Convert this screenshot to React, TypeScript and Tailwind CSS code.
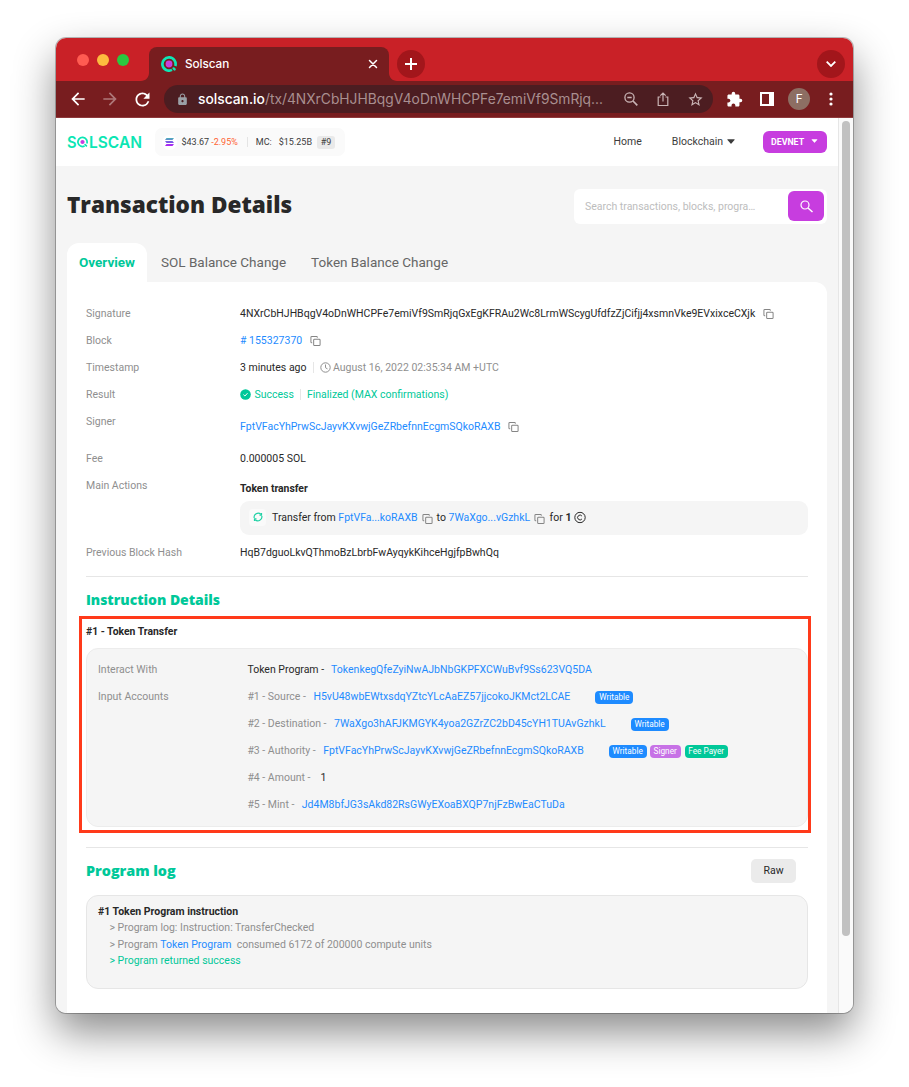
import React from "react";
import { Copy } from "lucide-react";
import { MdExtension, MdLock, MdStarBorder, MdRefresh, MdArrowBack, MdArrowForward } from "react-icons/md";

function CopyIcon({ className = "" }: { className?: string }) {
  return <Copy className={`h-[11px] w-[11px] shrink-0 translate-y-[0.5px] text-[#858585] ${className}`} strokeWidth={2.2} />;
}

function Link({ children }: { children: React.ReactNode }) {
  return <span className="text-[#1e8bff]">{children}</span>;
}

function Row({ label, children, className = "h-[27px]" }: { label: string; children: React.ReactNode; className?: string }) {
  return (
    <div className={`flex ${className}`}>
      <div className="h-[27px] w-[154px] shrink-0 leading-[27px] text-[#8f8f8f]">{label}</div>
      <div className="flex min-w-0 flex-1 items-center">{children}</div>
    </div>
  );
}

function Divider() {
  return <span className="h-[11px] w-px bg-[#e6e6e6]" />;
}

function Caret({ className }: { className: string }) {
  return (
    <svg viewBox="0 0 8 5" className={className} fill="currentColor">
      <path d="M.8.3h6.4c.4 0 .6.4.3.7L4.4 4.5c-.2.3-.6.3-.8 0L.5 1C.2.7.4.3.8.3z" />
    </svg>
  );
}

const badgeTone = {
  Writable: "bg-[#1e8bff] w-[38px]",
  Signer: "bg-[#c772e6] w-[31px]",
  "Fee Payer": "bg-[#00c899] w-[43px] ml-px",
};
type BadgeName = keyof typeof badgeTone;

function Badge({ name }: { name: BadgeName }) {
  return (
    <span className={`h-[13px] rounded-[4px] text-center text-[8.25px] leading-[13px] text-white ${badgeTone[name]}`}>{name}</span>
  );
}

function Account({ label, value, badges = [] }: { label: string; value: string; badges?: BadgeName[] }) {
  return (
    <div className="flex h-[27px] items-center">
      <span className="text-[#8f8f8f]">{label}</span>
      <span className="ml-[7.5px]"><Link>{value}</Link></span>
      <span className="ml-[25px] flex translate-y-[1px] gap-[3px]">
        {badges.map((b) => <Badge key={b} name={b} />)}
      </span>
    </div>
  );
}

function TabStrip() {
  return (
    <div className="flex h-[43px] items-end bg-[#c92127]">
      <div className="flex h-[43px] w-[85px] gap-[8px] pl-[21px] pt-[16px]">
        <span className="h-[12px] w-[12px] rounded-full bg-[#ff5b52]" />
        <span className="h-[12px] w-[12px] rounded-full bg-[#fdbb3f]" />
        <span className="h-[12px] w-[12px] rounded-full bg-[#2ac840]" />
      </div>
      <svg viewBox="0 0 8 8" className="h-[8px] w-[8px] text-[#781d1f]" fill="currentColor"><path d="M8 0v8H0c4.400 0 8-3.600 8-8z" /></svg>
      <div className="flex h-[34px] w-[240px] items-center rounded-t-[8px] bg-[#781d1f] pl-[12px] pr-[11px]">
        <svg viewBox="0 0 16 16" className="h-[16px] w-[16px]" fill="none">
          <path d="M11 13.900A6.600 6.600 0 1 1 14.300 10" stroke="#0fe6b5" strokeWidth="2.700" />
          <circle cx="8" cy="8" r="3.400" fill="#c73ddf" />
          <path d="M12.600 12.400l1 1" stroke="#0fe6b5" strokeWidth="2.400" strokeLinecap="round" />
        </svg>
        <span className="ml-[8px] translate-y-[1px] font-['Inter',sans-serif] text-[11.75px] font-medium tracking-[-0.05px] text-white">Solscan</span>
        <svg viewBox="0 0 10 10" className="ml-auto h-[10px] w-[10px]" stroke="#fff" strokeWidth="1.500" strokeLinecap="round"><path d="M1.500 1.500l7 7M8.500 1.500l-7 7" /></svg>
      </div>
      <svg viewBox="0 0 8 8" className="h-[8px] w-[8px] text-[#781d1f]" fill="currentColor"><path d="M0 0v8h8C3.600 8 0 4.400 0 0z" /></svg>
      <div className="mb-[3px] flex h-[28px] w-[28px] items-center justify-center rounded-full bg-[#a2161b]">
        <svg viewBox="0 0 12 12" className="h-[12px] w-[12px]" stroke="#fff" strokeWidth="2"><path d="M6 0v12M0 6h12" /></svg>
      </div>
      <div className="mb-[3px] ml-auto mr-[8px] flex h-[28px] w-[28px] items-center justify-center rounded-full bg-[#a2161b]">
        <svg viewBox="0 0 10 6" className="h-[6px] w-[10px]" stroke="#fff" strokeWidth="1.800" fill="none"><path d="M.7.7L5 5 9.300.7" /></svg>
      </div>
    </div>
  );
}

function Toolbar() {
  return (
    <div className="flex h-[37px] items-center border-b border-[#8f3a3c] bg-[#781d1f] pl-[12px] text-white">
      <MdArrowBack className="h-[20px] w-[20px]" />
      <MdArrowForward className="ml-[12px] h-[20px] w-[20px] opacity-40" />
      <MdRefresh className="ml-[12px] h-[21px] w-[21px]" />
      <div className="ml-[11px] flex h-[28px] w-[549px] items-center rounded-full bg-[#4c1d21] pl-[12px] text-[#c9b4b5]">
        <MdLock className="h-[13px] w-[13px] text-[#9aa0a6]" />
        <span className="ml-[9px] w-[406px] whitespace-nowrap font-['Inter',sans-serif] text-[13.8px] text-[#a98f90]">
          <span className="font-medium text-white">solscan.io</span>
          <span>/tx/4NXrCbHJHBqgV4oDnWHCPFe7emiVf9SmRjq...</span>
        </span>
        <svg viewBox="0 0 14 14" className="ml-[20px] h-[14px] w-[14px]" fill="none" stroke="currentColor" strokeWidth="1.300"><circle cx="5.500" cy="5.500" r="4.600" /><path d="M9 9l4.300 4.300" strokeWidth="1.700" /><path d="M3.300 5.500h4.400" /></svg>
        <svg viewBox="0 0 14 15" className="ml-[18px] h-[15px] w-[14px]" fill="none" stroke="currentColor" strokeWidth="1.200"><path d="M4.500 5H2.200v8.500h9.600V5H9.500M7 9.500V1.200M4.300 3.700L7 1l2.700 2.700" /></svg>
        <MdStarBorder className="ml-[17px] h-[17px] w-[17px]" />
      </div>
      <MdExtension className="ml-[13px] h-[17px] w-[17px]" />
      <svg viewBox="0 0 14 14" className="ml-[17px] h-[14px] w-[14px]" fill="currentColor"><path fillRule="evenodd" d="M0 0h14v14H0zM2 2v10h7V2z" /></svg>
      <span className="ml-[14px] flex h-[22px] w-[22px] items-center justify-center rounded-full bg-[#8d6e63] font-['Roboto',sans-serif] text-[12px]">F</span>
      <svg viewBox="0 0 4 14" className="ml-[19px] h-[14px] w-[4px]" fill="currentColor"><circle cx="2" cy="2" r="1.600" /><circle cx="2" cy="7" r="1.600" /><circle cx="2" cy="12" r="1.600" /></svg>
    </div>
  );
}

function SiteHeader() {
  return (
    <div className="flex h-[48px] items-center bg-white px-[11px] text-[#3c3c3c]">
      <div className="flex w-[75px] items-center font-['Inter',sans-serif] text-[16px] font-semibold leading-none text-[#0ce6b4]">
        <span className="w-[12px] origin-left scale-x-[0.92]">S</span>
        <svg viewBox="0 0 12 12" className="h-[12px] w-[11px] shrink-0" fill="none">
          <path d="M8.300 10.400A5 5 0 1 1 10.700 7.700" stroke="#0ce6b4" strokeWidth="1.900" />
          <circle cx="6" cy="6" r="2.300" fill="#c73ddf" />
          <path d="M8.800 8.800l1.500 1.500" stroke="#0ce6b4" strokeWidth="1.800" strokeLinecap="round" />
        </svg>
        <span className="ml-px origin-left scale-x-[0.97]">LSCAN</span>
      </div>
      <div className="ml-[12.500px] flex h-[28px] w-[190px] items-center rounded-[7px] bg-[#fafafa] pl-[7px] text-[9px]">
        <span className="flex h-[15px] w-[15px] items-center justify-center rounded-full bg-white">
          <svg viewBox="0 0 9 8" className="h-[8px] w-[9px]" fill="none">
            <defs><linearGradient id="sol" x1="0" y1="8" x2="0" y2="0" gradientUnits="userSpaceOnUse"><stop stopColor="#b51cf5" /><stop offset=".5" stopColor="#7a5be6" /><stop offset="1" stopColor="#4bb3b8" /></linearGradient></defs>
            <path d="M1.500 0H9L7.500 1.900H0zM0 3.050h7.500L9 4.950H1.500zM1.500 6.100H9L7.500 8H0z" fill="url(#sol)" />
          </svg>
        </span>
        <span className="ml-[5px] translate-y-[0.5px]">$43.67</span>
        <span className="ml-[2px] translate-y-[0.5px] text-[#ff6433]">-2.95%</span>
        <span className="ml-[9px] h-[10px] w-px bg-[#e4e4e4]" />
        <span className="ml-[8px] translate-y-[0.5px]">MC:</span>
        <span className="ml-[7px] translate-y-[0.5px]">$15.25B</span>
        <span className="ml-[5px] h-[13px] w-[18px] rounded-[3px] bg-[#e9e9e9] text-center leading-[13px]">#9</span>
      </div>
      <span className="ml-auto">Home</span>
      <span className="ml-[30px]">Blockchain</span>
      <Caret className="ml-[4px] h-[5px] w-[8px] -translate-y-px" />
      <div className="ml-[28px] flex h-[22px] w-[64px] items-center rounded-[6px] bg-[#c73ddf] pl-[8px] text-[8.8px] font-bold text-white">
        <span className="translate-y-[0.5px]">DEVNET</span>
        <Caret className="ml-[7px] h-[4px] w-[7px] -translate-y-px" />
      </div>
    </div>
  );
}

function SectionTitle({ children }: { children: React.ReactNode }) {
  return <h2 className="font-['Open_Sans',sans-serif] text-[14px] font-extrabold tracking-[-0.04px] text-[#00c899]">{children}</h2>;
}

function TransactionCard() {
  return (
    <div className="min-h-0 flex-1 rounded-tr-[12px] bg-white px-[19px] pt-[18px]">
      <Row label="Signature">4NXrCbHJHBqgV4oDnWHCPFe7emiVf9SmRjqGxEgKFRAu2Wc8LrmWScygUfdfzZjCifjj4xsmnVke9EVxixceCXjk<CopyIcon className="ml-[7.500px]" /></Row>
      <Row label="Block"><Link># 155327370</Link><CopyIcon className="ml-[7.500px]" /></Row>
      <Row label="Timestamp">
        <span className="mr-[7px]">3 minutes ago</span><Divider />
        <svg viewBox="0 0 11 11" className="ml-[5.500px] h-[11px] w-[11px]" fill="none" stroke="#8f8f8f"><circle cx="5.500" cy="5.500" r="4.700" /><path d="M5.500 2.500v3.200l2 1.200" /></svg>
        <span className="ml-[2px] text-[#8f8f8f]">August 16, 2022 02:35:34 AM +UTC</span>
      </Row>
      <Row label="Result">
        <svg viewBox="0 0 11 11" className="h-[11px] w-[11px]" fill="none"><circle cx="5.500" cy="5.500" r="5.300" fill="#00c899" /><path d="M3.400 5.600l1.500 1.400 2.600-2.800" stroke="#fff" /></svg>
        <span className="ml-[3.500px] mr-[6px] text-[#00c899]">Success</span><Divider />
        <span className="ml-[6px] text-[#00c899]">Finalized (MAX confirmations)</span>
      </Row>
      <Row label="Signer" className="h-[37px]"><Link>FptVFacYhPrwScJayvKXvwjGeZRbefnnEcgmSQkoRAXB</Link><CopyIcon className="ml-[7.500px]" /></Row>
      <Row label="Fee">0.000005 SOL</Row>
      <Row label="Main Actions" className="h-[67px]">
        <div className="w-full">
          <div className="h-[29px] pt-[4px] text-[10.4px] font-bold leading-[25px]">Token transfer</div>
          <div className="mb-[4px] flex h-[34px] items-center rounded-[9px] bg-[#f5f5f5] pl-[9px]">
            <span className="mr-[6px] flex h-[17px] w-[17px] -translate-y-px items-center justify-center rounded-[4px] bg-[#fafafa]">
              <svg viewBox="0 0 10 10" className="h-[10px] w-[10px]" fill="none" stroke="#1fd1a5" strokeWidth="1.200">
                <path d="M1.200 6A4 4 0 0 1 7.900 2.300M8.800 4A4 4 0 0 1 2.100 7.700" /><path d="M8.500.900v2.200H6.500M1.500 9.100V6.900h2" />
              </svg>
            </span>
            <span className="whitespace-pre">Transfer from </span><Link>FptVFa...koRAXB</Link><CopyIcon className="ml-[4px] mr-[4px]" />
            <span className="whitespace-pre">to </span><Link>7WaXgo...vGzhkL</Link><CopyIcon className="ml-[3.500px] mr-[5px]" />
            <span className="whitespace-pre">for <b className="font-bold">1</b></span>
            <svg viewBox="0 0 12 12" className="ml-[3px] h-[12px] w-[12px] -translate-y-[0.5px]" fill="none" stroke="#282828"><circle cx="6" cy="6" r="5.200" /><path d="M7.900 4.500A2.400 2.400 0 1 0 7.900 7.500" /></svg>
          </div>
        </div>
      </Row>
      <Row label="Previous Block Hash">HqB7dguoLkvQThmoBzLbrbFwAyqykKihceHgjfpBwhQq</Row>

      <div className="mt-[10px] border-t border-[#e6e6e6]">
        <div className="flex h-[45px] items-center"><SectionTitle>Instruction Details</SectionTitle></div>
        <div className="relative">
          <div className="absolute -left-[7px] -right-[3px] -top-[6px] h-[217px] border-[3px] border-[#ff3a1a]" />
          <div className="h-[19px] text-[10.4px] font-bold leading-[19px]">#1 - Token Transfer</div>
          <div className="mt-[7px] flex h-[179px] flex-col rounded-[12px] border border-[#ececec] bg-[#f5f5f5] px-[11px] pt-[7px]">
            <div className="flex h-[27px] items-center">
              <span className="w-[149.400px] text-[#8f8f8f]">Interact With</span>
              <span className="mr-[7px]">Token Program -</span>
              <Link>TokenkegQfeZyiNwAJbNbGKPFXCWuBvf9Ss623VQ5DA</Link>
            </div>
            <div className="flex">
              <span className="w-[149.400px] leading-[27px] text-[#8f8f8f]">Input Accounts</span>
              <div>
                <Account label="#1 - Source -" value="H5vU48wbEWtxsdqYZtcYLcAaEZ57jjcokoJKMct2LCAE" badges={["Writable"]} />
                <Account label="#2 - Destination -" value="7WaXgo3hAFJKMGYK4yoa2GZrZC2bD45cYH1TUAvGzhkL" badges={["Writable"]} />
                <Account label="#3 - Authority -" value="FptVFacYhPrwScJayvKXvwjGeZRbefnnEcgmSQkoRAXB" badges={["Writable", "Signer", "Fee Payer"]} />
                <div className="flex h-[27px] items-center"><span className="text-[#8f8f8f]">#4 - Amount -</span><span className="ml-[10px]">1</span></div>
                <Account label="#5 - Mint -" value="Jd4M8bfJG3sAkd82RsGWyEXoaBXQP7njFzBwEaCTuDa" />
              </div>
            </div>
          </div>
        </div>
      </div>

      <div className="mt-[20px] border-t border-[#e6e6e6]">
        <div className="mb-[2px] flex h-[45px] items-center justify-between pr-[12px]">
          <SectionTitle><span className="text-[14.4px]">Program log</span></SectionTitle>
          <div className="h-[24px] w-[45px] rounded-[5px] bg-[#ebebeb] text-center leading-[24px]">Raw</div>
        </div>
        <div className="h-[94px] rounded-[12px] border border-[#e6e6e6] bg-[#f5f5f5] pl-[11px] pt-[8px] leading-[16.4px] text-[#8f8f8f]">
          <div className="font-bold text-[#282828]">#1 Token Program instruction</div>
          <div className="whitespace-pre pl-[11.500px]">
            <div>&gt; Program log: Instruction: TransferChecked</div>
            <div>&gt; Program <Link>Token Program</Link>{"  "}consumed 6172 of 200000 compute units</div>
            <div className="text-[#00c899]">&gt; Program returned success</div>
          </div>
        </div>
      </div>
    </div>
  );
}

export default function App() {
  return (
    <div className="h-[1087px] w-[909px] overflow-hidden bg-white pl-[56px] pt-[38px]">
      <div className="flex h-[975px] w-[797px] flex-col overflow-hidden rounded-[10px] bg-white font-['Roboto',sans-serif] text-[10.5px] text-[#282828] shadow-[0_0_0_1px_rgba(0,0,0,0.25),0_19px_42px_rgba(0,0,0,0.46)]">
        <TabStrip />
        <Toolbar />
        <div className="flex min-h-0 flex-1">
          <div className="flex w-[782px] flex-col bg-[#f5f5f5]">
            <SiteHeader />
            <div className="flex min-h-0 flex-1 flex-col px-[11px]">
              <div className="flex h-[77px] items-center justify-between">
                <h1 className="font-['Open_Sans',sans-serif] text-[22.55px] font-extrabold">Transaction Details</h1>
                <div className="mt-[3px] flex h-[35px] w-[253px] items-center justify-between rounded-[6px] bg-white pl-[11px] pr-[3px] text-[#bdbdbd]">
                  <span className="translate-y-[0.5px]">Search transactions, blocks, progra…</span>
                  <div className="flex h-[30px] w-[36px] items-center justify-center rounded-[6px] bg-[#c73ddf]">
                    <svg viewBox="0 0 13 13" className="h-[13px] w-[13px]" fill="none" stroke="#fff" strokeWidth="1.200"><circle cx="5" cy="5" r="4" /><path d="M8 8l4.500 4" strokeWidth="1.500" /></svg>
                  </div>
                </div>
              </div>
              <div className="flex h-[39px] items-center text-[13.5px] text-[#666]">
                <div className="h-full w-[80px] rounded-t-[12px] bg-white text-center font-bold leading-[39px] text-[#00c899]">Overview</div>
                <span className="ml-[14px]">SOL Balance Change</span>
                <span className="ml-[25px]">Token Balance Change</span>
              </div>
              <TransactionCard />
            </div>
          </div>
          <div className="flex-1 border-l border-[#e6e6e6] bg-[#fafafa] pl-[3px] pt-[3px]">
            <div className="h-[815px] w-[8px] rounded-full bg-[#c1c1c1]" />
          </div>
        </div>
      </div>
    </div>
  );
}
